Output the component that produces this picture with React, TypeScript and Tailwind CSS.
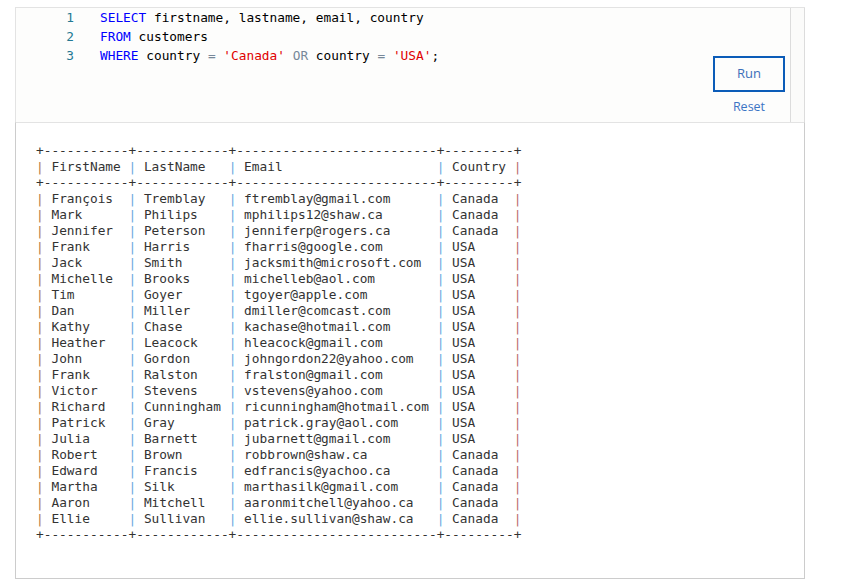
import React from "react";

const rows: [string, string, string, string][] = [
  ["François", "Tremblay", "ftremblay@gmail.com", "Canada"],
  ["Mark", "Philips", "mphilips12@shaw.ca", "Canada"],
  ["Jennifer", "Peterson", "jenniferp@rogers.ca", "Canada"],
  ["Frank", "Harris", "fharris@google.com", "USA"],
  ["Jack", "Smith", "jacksmith@microsoft.com", "USA"],
  ["Michelle", "Brooks", "michelleb@aol.com", "USA"],
  ["Tim", "Goyer", "tgoyer@apple.com", "USA"],
  ["Dan", "Miller", "dmiller@comcast.com", "USA"],
  ["Kathy", "Chase", "kachase@hotmail.com", "USA"],
  ["Heather", "Leacock", "hleacock@gmail.com", "USA"],
  ["John", "Gordon", "johngordon22@yahoo.com", "USA"],
  ["Frank", "Ralston", "fralston@gmail.com", "USA"],
  ["Victor", "Stevens", "vstevens@yahoo.com", "USA"],
  ["Richard", "Cunningham", "ricunningham@hotmail.com", "USA"],
  ["Patrick", "Gray", "patrick.gray@aol.com", "USA"],
  ["Julia", "Barnett", "jubarnett@gmail.com", "USA"],
  ["Robert", "Brown", "robbrown@shaw.ca", "Canada"],
  ["Edward", "Francis", "edfrancis@yachoo.ca", "Canada"],
  ["Martha", "Silk", "marthasilk@gmail.com", "Canada"],
  ["Aaron", "Mitchell", "aaronmitchell@yahoo.ca", "Canada"],
  ["Ellie", "Sullivan", "ellie.sullivan@shaw.ca", "Canada"],
];

const widths = [9, 10, 24, 7];
const border = "+" + widths.map((w) => "-".repeat(w + 2)).join("+") + "+";

function Row({ cells }: { cells: string[] }) {
  return (
    <div>
      <span className="text-[#b07840]">|</span>
      {cells.map((c, i) => (
        <React.Fragment key={i}>
          <span>{" " + c.padEnd(widths[i]) + " "}</span>
          <span className={i === cells.length - 1 ? "text-[#b86a6a]" : "text-[#6aa8e0]"}>|</span>
        </React.Fragment>
      ))}
    </div>
  );
}

export default function App() {
  const mono = "font-['DejaVu_Sans_Mono',monospace] text-[12.8px]";
  return (
    <div className="w-[855px] h-[582px] bg-white pt-[7px] pl-[15px]">
      <div className="w-[790px]">
        {/* Editor */}
        <div className="h-[115px] flex border-t border-l border-[#e3e3e3] bg-[#fdfdfc]">
          <div className={`w-[58px] text-right text-[#237893] ${mono} leading-[19px]`}>
            <div>1</div>
            <div>2</div>
            <div>3</div>
          </div>
          <div className={`flex-1 pl-[26px] whitespace-pre text-[#000] ${mono} leading-[19px]`}>
            <div>
              <span className="text-[#0000ff]">SELECT</span> firstname, lastname, email, country
            </div>
            <div>
              <span className="text-[#0000ff]">FROM</span> customers
            </div>
            <div>
              <span className="text-[#0000ff]">WHERE</span> country <span className="text-[#778899]">=</span>{" "}
              <span className="text-[#e00000]">'Canada'</span> <span className="text-[#778899]">OR</span> country{" "}
              <span className="text-[#778899]">=</span> <span className="text-[#e00000]">'USA'</span>;
            </div>
          </div>
          <div className="flex flex-col items-center pt-[48px] pr-[5px] font-['Open_Sans',sans-serif]">
            <button className="w-[72px] h-[36px] border-2 border-[#0b5cb8] text-[#3c6fba] text-[13px] bg-transparent">
              Run
            </button>
            <span className="mt-[6px] text-[12.5px] text-[#3c74c4]">Reset</span>
          </div>
          <div className="w-[15px] border-l border-r border-[#dcdcdc] bg-[#fbfbfa]" />
        </div>
        {/* Output */}
        <div className="h-[457px] border-t border-t-[#e3e3e3] border-l border-r border-b border-[#cccccc] bg-white pt-[20px] pl-[20px]">
          <div className={`whitespace-pre text-[#333] ${mono} leading-[16px]`}>
            <div>{border}</div>
            <Row cells={["FirstName", "LastName", "Email", "Country"]} />
            <div>{border}</div>
            {rows.map((r, i) => (
              <Row key={i} cells={r} />
            ))}
            <div>{border}</div>
          </div>
        </div>
      </div>
    </div>
  );
}
